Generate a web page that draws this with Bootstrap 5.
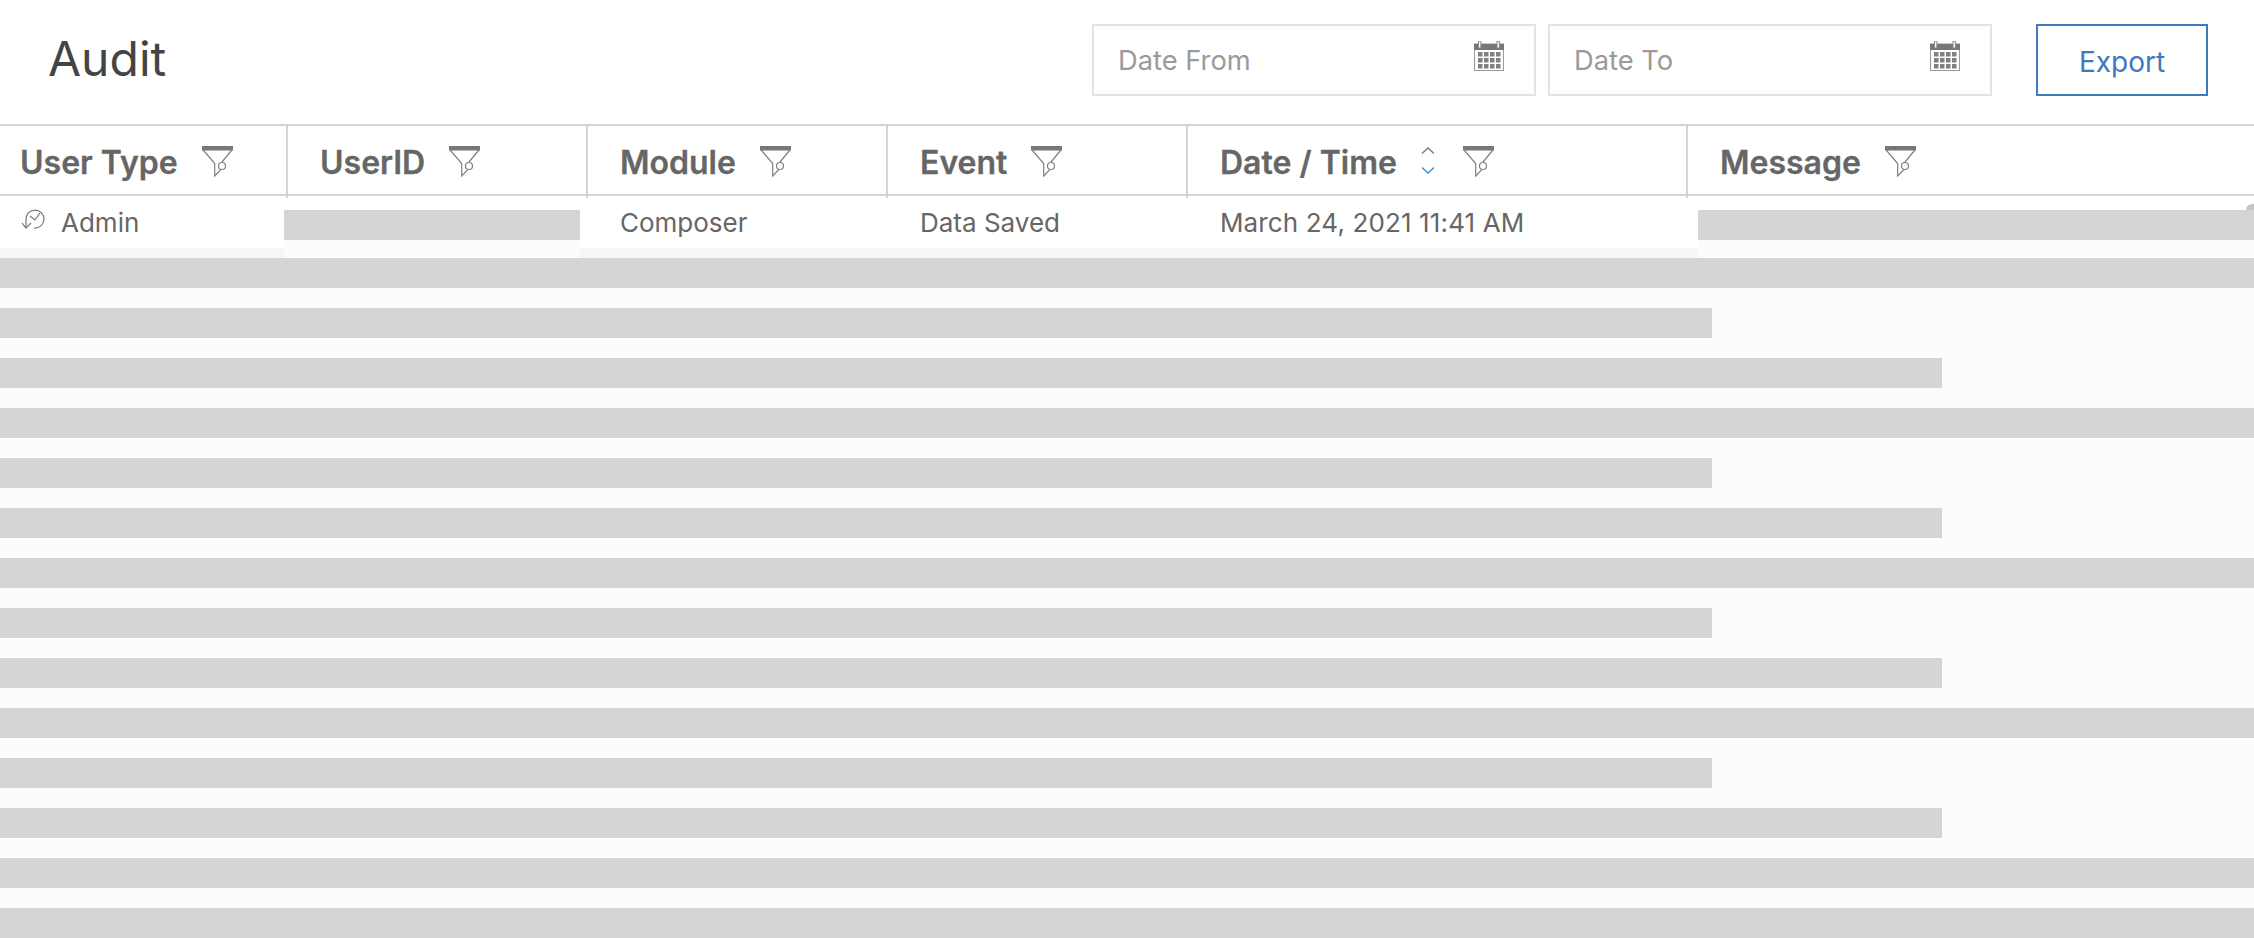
<!DOCTYPE html>
<html lang="en">
<head>
<meta charset="utf-8">
<title>Audit</title>
<link href="https://cdn.jsdelivr.net/npm/bootstrap@5.3.0/dist/css/bootstrap.min.css" rel="stylesheet">
<style>
html, body { height: 938px; overflow: hidden; }
body { font-family: Inter, "Liberation Sans", sans-serif; background: #fbfdfc; color: #666; position: relative; }
.top-bar { height: 124px; padding: 0 46px 4px 48px; background: #fff; }
.page-title { font-size: 48px; font-weight: 400; color: #444; margin: 0 auto 2px 0; line-height: 1; }
.date-box { width: 444px; height: 72px; }
.date-box .form-control { height: 72px; border: 2px solid #e3e3e3; border-radius: 0; font-size: 27.3px; padding: 0 24px; color: #666; }
.date-box .form-control::placeholder { color: #9a9a9a; opacity: 1; }
.date-box svg { position: absolute; top: 17px; right: 32px; }
.export-btn { width: 172px; height: 72px; margin-left: 44px; border: 2px solid #3d79bd; border-radius: 0; color: #3d79bd; font-size: 28px; padding: 4px 0 0; background: #fff; }
.head-row { display: grid; grid-template-columns: 286px 300px 300px 300px 500px 1fr; position: relative; z-index: 1; height: 72px; border-top: 2px solid #d4d4d4; border-bottom: 2px solid #d4d4d4; background: #fff; }
.head-cell { height: 72px; padding: 2px 0 0 32px; border-left: 2px solid #d4d4d4; font-size: 32px; font-weight: 600; color: #666; -webkit-text-stroke: .3px #666; white-space: nowrap; }
.head-cell:first-child { border-left: 0; padding-left: 20px; }
.head-cell .fn { margin: 0 0 3px 24px; flex: none; }
.head-cell .sort { margin: 0 28px 5px 24px; flex: none; }
.head-cell .sort + .fn { margin-left: 0; }
.first-row { display: flex; height: 62px; }
.body-cell { height: 62px; background: #fff; border-bottom: 10px solid #f5f6f7; font-size: 26px; color: #666; white-space: nowrap; padding: 0 0 0 20px; }
.cell-a { width: 284px; gap: 15px; }
.cell-a svg { margin-bottom: 6px; margin-left: 1px; flex: none; }
.cell-b { width: 296px; background: linear-gradient(#fff 0 14px, #fbfdfc 14px); height: 62px; padding-top: 14px; }
.cell-c { width: 1118px; padding-left: 40px; }
.cell-d { flex: 1; background: linear-gradient(#fff 0 14px, #fbfdfc 14px); height: 62px; padding-top: 14px; }
.slot-m, .slot-e { width: 300px; }
.stamp { letter-spacing: .13px; }
.bar { height: 30px; background: #d4d6d5; }
.rows { display: flex; flex-direction: column; gap: 20px; }
.w-s { width: 1712px; }
.w-m { width: 1942px; }
.w-f { width: 100%; }
.thumb { position: absolute; top: 204px; right: 0; width: 8px; height: 6px; background: #c4c4c4; border-radius: 6px 0 0 0; }
.svg-defs { position: absolute; width: 0; height: 0; }
</style>
</head>
<body>
<header class="top-bar d-flex align-items-center">
  <h1 class="page-title">Audit</h1>
  <div class="date-box position-relative me-2">
    <input class="form-control" type="text" placeholder="Date From">
    <svg width="30" height="30" viewBox="0 0 30 30"><use href="#cal"/></svg>
  </div>
  <div class="date-box position-relative ms-1">
    <input class="form-control" type="text" placeholder="Date To">
    <svg width="30" height="30" viewBox="0 0 30 30"><use href="#cal"/></svg>
  </div>
  <button class="btn export-btn" type="button">Export</button>
</header>

<svg class="svg-defs">
  <defs>
    <g id="cal">
      <rect x="0.5" y="3" width="29" height="26.5" fill="#fff" stroke="#999" stroke-width="1"/>
      <rect x="0" y="3" width="30" height="6" fill="#777"/>
      <rect x="4.5" y="0" width="2.4" height="7" fill="#fff" stroke="#888" stroke-width="1"/>
      <rect x="23" y="0" width="2.4" height="7" fill="#fff" stroke="#888" stroke-width="1"/>
      <g fill="#808080">
        <rect x="4" y="11" width="4.5" height="4.5"/><rect x="10" y="11" width="4.5" height="4.5"/><rect x="16" y="11" width="4.5" height="4.5"/><rect x="22" y="11" width="4.5" height="4.5"/>
        <rect x="4" y="17" width="4.5" height="4.5"/><rect x="10" y="17" width="4.5" height="4.5"/><rect x="16" y="17" width="4.5" height="4.5"/><rect x="22" y="17" width="4.5" height="4.5"/>
        <rect x="4" y="23" width="4.5" height="4.5"/><rect x="10" y="23" width="4.5" height="4.5"/><rect x="16" y="23" width="4.5" height="4.5"/><rect x="22" y="23" width="4.5" height="4.5"/>
      </g>
    </g>
    <g id="fnl">
      <rect x="0" y="0" width="31" height="4.5" fill="#777"/>
      <path d="M0.7 3.5 L12.7 17.5 V30 L18.5 24 V23.5 M30.3 3.5 L20 16" fill="none" stroke="#808080" stroke-width="1.2"/>
      <circle cx="20" cy="20" r="3.5" fill="none" stroke="#808080" stroke-width="1.2"/>
    </g>
  </defs>
</svg>

<div class="head-row">
  <div class="head-cell d-flex align-items-center">User Type<svg class="fn" width="31" height="31" viewBox="0 0 31 31"><use href="#fnl"/></svg></div>
  <div class="head-cell d-flex align-items-center">UserID<svg class="fn" width="31" height="31" viewBox="0 0 31 31"><use href="#fnl"/></svg></div>
  <div class="head-cell d-flex align-items-center">Module<svg class="fn" width="31" height="31" viewBox="0 0 31 31"><use href="#fnl"/></svg></div>
  <div class="head-cell d-flex align-items-center">Event<svg class="fn" width="31" height="31" viewBox="0 0 31 31"><use href="#fnl"/></svg></div>
  <div class="head-cell d-flex align-items-center">Date / Time<svg class="sort" width="14" height="27" viewBox="0 0 14 27"><path d="M1 6.5 L7 1 L13 6.5" fill="none" stroke="#777" stroke-width="1.3"/><path d="M1 20.5 L7 26 L13 20.5" fill="none" stroke="#2b8fe0" stroke-width="1.3"/></svg><svg class="fn" width="31" height="31" viewBox="0 0 31 31"><use href="#fnl"/></svg></div>
  <div class="head-cell d-flex align-items-center">Message<svg class="fn" width="31" height="31" viewBox="0 0 31 31"><use href="#fnl"/></svg></div>
</div>

<div class="first-row">
  <div class="body-cell cell-a d-flex align-items-center">
    <svg width="25" height="21" viewBox="0 0 25 21" fill="none" stroke="#777" stroke-width="1.2"><path d="M5 19 V11 A9 9 0 1 1 13 19"/><path d="M1 14 L5 19 L10 14"/><path d="M9 7 L14 11 L19 4"/></svg>
    <span>Admin</span>
  </div>
  <div class="cell-b"><div class="bar"></div></div>
  <div class="body-cell cell-c d-flex align-items-center">
    <span class="slot-m">Composer</span>
    <span class="slot-e">Data Saved</span>
    <span class="stamp">March 24, 2021 11:41 AM</span>
  </div>
  <div class="cell-d"><div class="bar"></div></div>
</div>

<div class="rows">
  <div class="bar w-f"></div>
  <div class="bar w-s"></div>
  <div class="bar w-m"></div>
  <div class="bar w-f"></div>
  <div class="bar w-s"></div>
  <div class="bar w-m"></div>
  <div class="bar w-f"></div>
  <div class="bar w-s"></div>
  <div class="bar w-m"></div>
  <div class="bar w-f"></div>
  <div class="bar w-s"></div>
  <div class="bar w-m"></div>
  <div class="bar w-f"></div>
  <div class="bar w-f"></div>
</div>
<div class="thumb"></div>
<script src="https://cdn.jsdelivr.net/npm/bootstrap@5.3.0/dist/js/bootstrap.bundle.min.js"></script>
</body>
</html>
